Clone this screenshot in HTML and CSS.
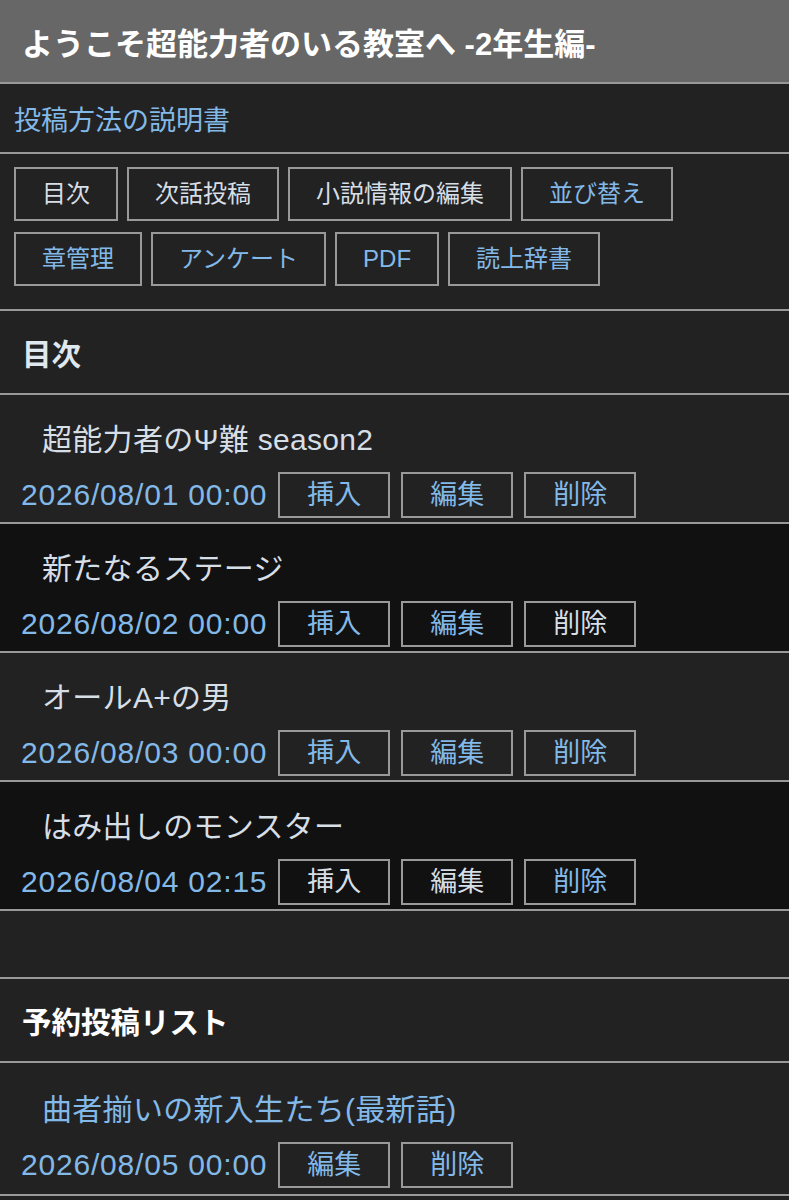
FILE: index.html
```html
<!DOCTYPE html>
<html lang="ja">
  <head>
    <meta charset="UTF-8" />
    <meta name="viewport" content="width=device-width, initial-scale=1.0" />
    <title>小説管理</title>
    <link rel="stylesheet" href="styles.css">
  </head>
  <body>
    <header class="novel-title">ようこそ超能力者のいる教室へ -2年生編-</header>

    <div class="box help">
      <a href="#" class="link">投稿方法の説明書</a>
    </div>

    <nav class="box menu">
      <a href="#" class="btn visited">目次</a>
      <a href="#" class="btn visited">次話投稿</a>
      <a href="#" class="btn visited">小説情報の編集</a>
      <a href="#" class="btn">並び替え</a>
      <a href="#" class="btn">章管理</a>
      <a href="#" class="btn">アンケート</a>
      <a href="#" class="btn">PDF</a>
      <a href="#" class="btn">読上辞書</a>
    </nav>

    <h2 class="section-title">目次</h2>

    <ul class="episodes">
      <li class="episode">
        <div class="episode-title">超能力者のΨ難 season2</div>
        <div class="episode-meta">
          <span class="date">2026/08/01 00:00</span>
          <a href="#" class="btn small">挿入</a>
          <a href="#" class="btn small">編集</a>
          <a href="#" class="btn small">削除</a>
        </div>
      </li>
      <li class="episode alt">
        <div class="episode-title">新たなるステージ</div>
        <div class="episode-meta">
          <span class="date">2026/08/02 00:00</span>
          <a href="#" class="btn small">挿入</a>
          <a href="#" class="btn small">編集</a>
          <a href="#" class="btn small visited">削除</a>
        </div>
      </li>
      <li class="episode">
        <div class="episode-title">オールA+の男</div>
        <div class="episode-meta">
          <span class="date">2026/08/03 00:00</span>
          <a href="#" class="btn small">挿入</a>
          <a href="#" class="btn small">編集</a>
          <a href="#" class="btn small">削除</a>
        </div>
      </li>
      <li class="episode alt">
        <div class="episode-title">はみ出しのモンスター</div>
        <div class="episode-meta">
          <span class="date">2026/08/04 02:15</span>
          <a href="#" class="btn small visited">挿入</a>
          <a href="#" class="btn small visited">編集</a>
          <a href="#" class="btn small">削除</a>
        </div>
      </li>
    </ul>

    <div class="box spacer"></div>

    <h2 class="section-title reserve">予約投稿リスト</h2>

    <ul class="episodes reserved">
      <li class="episode">
        <a href="#" class="episode-title link">曲者揃いの新入生たち(最新話)</a>
        <div class="episode-meta">
          <span class="date">2026/08/05 00:00</span>
          <a href="#" class="btn small">編集</a>
          <a href="#" class="btn small">削除</a>
        </div>
      </li>
    </ul>
  </body>
</html>
```

FILE: styles.css
```css
body {
  font-family: "Liberation Sans", "Noto Sans CJK JP", sans-serif;
  margin: 0;
  padding: 0;
  background-color: #222;
  color: #d6dee6;
}

a {
  text-decoration: none;
  color: #82b9e8;
}

.novel-title {
  height: 82px;
  display: flex;
  align-items: center;
  padding: 0 22px;
  background-color: #676767;
  color: #fff;
  font-size: 31px;
  font-weight: bold;
  border-bottom: 2px solid #999;
}

.box {
  border-bottom: 2px solid #999;
}

.help {
  height: 68px;
  display: flex;
  align-items: center;
  padding: 0 14px;
  font-size: 27px;
}

.menu {
  display: flex;
  flex-wrap: wrap;
  gap: 11px 9px;
  padding: 13px 14px 23px;
}

.btn {
  display: inline-block;
  height: 50px;
  line-height: 50px;
  padding: 0 26px;
  border: 2px solid #999;
  font-size: 24px;
}

.btn.visited {
  color: #d6dee6;
}

.section-title {
  margin: 0;
  height: 82px;
  display: flex;
  align-items: center;
  padding: 0 22px;
  font-size: 29.5px;
  font-weight: bold;
  color: #dfe7ef;
  border-bottom: 2px solid #999;
}

.section-title.reserve {
  color: #fff;
}

.episodes {
  list-style: none;
  margin: 0;
  padding: 0;
}

.episode {
  padding: 25px 0 4px 21px;
  border-bottom: 2px solid #999;
}

.episode.alt {
  background-color: #111;
}

.reserved .episode {
  padding-top: 27px;
  padding-bottom: 6px;
}

.episode-title {
  display: block;
  margin-left: 21px;
  height: 40px;
  line-height: 40px;
  font-size: 30px;
  letter-spacing: 0.3px;
}

.episode-meta {
  display: flex;
  align-items: center;
  gap: 11px;
  margin-top: 12px;
}

.date {
  font-size: 30px;
  color: #82b9e8;
  letter-spacing: 0.8px;
}

.btn.small {
  height: 42px;
  line-height: 42px;
  padding: 0 27px;
  font-size: 27px;
}

.spacer {
  height: 66px;
}
```
